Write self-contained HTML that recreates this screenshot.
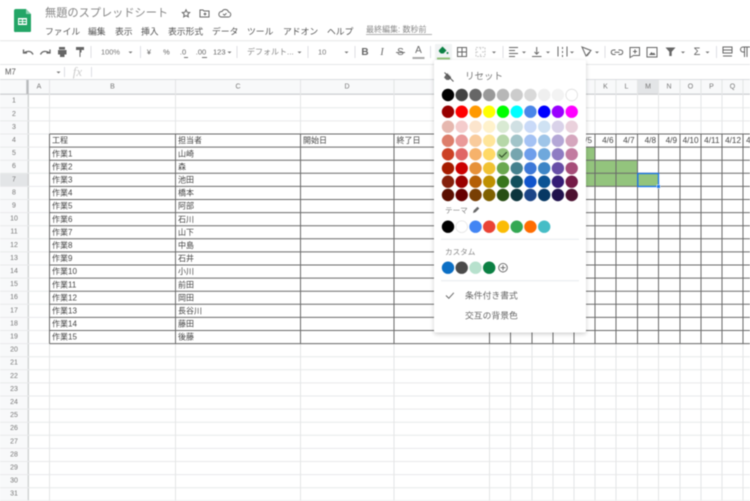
<!DOCTYPE html>
<html lang="ja"><head><meta charset="utf-8"><title>無題のスプレッドシート</title>
<style>
html,body{margin:0;padding:0;width:750px;height:501px;overflow:hidden;background:#fff}
svg{display:block;filter:blur(.45px)}
text{font-family:"Liberation Sans","Noto Sans CJK JP",sans-serif;fill:#444;dominant-baseline:central}
.m{font-size:8.8px;fill:#555}
.h{font-size:7px;fill:#777;text-anchor:middle}
.c{font-size:8px;fill:#444}
.d{font-size:8.2px;fill:#444;text-anchor:end}
.ar{fill:#777}
.ic{fill:none;stroke:#666;stroke-width:1}
.s{fill:#666}
</style></head><body>
<svg width="750" height="501" viewBox="0 0 750 501" xmlns="http://www.w3.org/2000/svg">
<rect width="750" height="501" fill="#fff"/>
<!-- logo -->
<path d="M16 9h10l5 5v17a1 1 0 0 1-1 1H16a1.500 1.500 0 0 1-2-1V11a2 2 0 0 1 2-2z" fill="#23a566"/>
<path d="M26 9l5 5h-5z" fill="#8ed1b1"/>
<path d="M18 18h9v7h-9z M19 19.500v1.500h3v-1.500z M23 19.500v1.500h3v-1.500z M19 22v1.500h3V22z M23 22v1.500h3V22z" fill="#fff" fill-rule="evenodd"/>
<!-- title -->
<text x="45" y="13.500" style="font-size:11.200px;fill:#888">無題のスプレッドシート</text>
<path d="M186 9.800l1.100 2.400 2.600.3-1.900 1.800.5 2.600-2.300-1.300-2.300 1.300.5-2.600-1.900-1.800 2.600-.3z" class="ic"/>
<path d="M200 10h3l1 1h5v6h-9z M205 12.500v3 M203.500 14h3" class="ic"/>
<path d="M221 17h7a2.500 2.500 0 0 0 .5-5 3.500 3.500 0 0 0-6.500-.5 2.800 2.800 0 0 0-1 5.500z M223 14l1.500 1.200 2-2" class="ic"/>
<!-- menu -->
<text x="45" y="31.500" class="m">ファイル</text><text x="88" y="31.500" class="m">編集</text><text x="115" y="31.500" class="m">表示</text><text x="141" y="31.500" class="m">挿入</text><text x="168" y="31.500" class="m">表示形式</text><text x="212" y="31.500" class="m">データ</text><text x="247" y="31.500" class="m">ツール</text><text x="283" y="31.500" class="m">アドオン</text><text x="327" y="31.500" class="m">ヘルプ</text>
<text x="366" y="29.500" style="font-size:8px;fill:#888">最終編集: 数秒前</text>
<path d="M366 34.500H432" stroke="#999" stroke-width=".7"/>
<!-- toolbar -->
<path d="M0 40.700H750M0 64.500H750" stroke="#e6e7e8" stroke-width="1"/>
<path d="M91 46v12M140.500 46v12M237 46v12M308 46v12M355 46v12M430.500 46v12M503 46v12M605 46v12M716.500 46v12" stroke="#dadce0" stroke-width=".9"/>
<path d="M33 54.500c-1.500-3.500-5-4-9-1.800M23.500 49.500v3.500h3.500" class="ic" style="stroke-width:1.300px"/>
<path d="M40.500 54.500c1.500-3.500 5-4 9-1.800M50 49.500v3.500h-3.500" class="ic" style="stroke-width:1.300px"/>
<path d="M59 47h6v2.500h-6z M58 50h8.500v4.500h-2v2.500h-4.500v-2.500h-2z" class="s"/>
<path d="M76 47h8v3h-8z M79.500 50h2v2.500h-1v4.500h-1z" class="s"/>
<text x="101" y="52" style="font-size:7.400px;fill:#777">100%</text>
<path d="M128.500 51.500h4l-2 2z M227.500 51.500h4l-2 2z M297.500 51.500h4l-2 2z M344.500 51.500h4l-2 2z M492 51.500h4l-2 2z M522 51.500h4l-2 2z M546 51.500h4l-2 2z M570 51.500h4l-2 2z M595 51.500h4l-2 2z M681 51.500h4l-2 2z M705.500 51.500h4l-2 2z" class="ar"/>
<text x="149" y="52" style="font-size:7.500px;fill:#666;text-anchor:middle">¥</text>
<text x="166.500" y="52" style="font-size:7.500px;fill:#666;text-anchor:middle">%</text>
<text x="183" y="52" style="font-size:7.500px;fill:#666;text-anchor:middle">.0</text><path d="M184 57.500h4" stroke="#666" stroke-width=".9"/>
<text x="201" y="52" style="font-size:7.500px;fill:#666;text-anchor:middle">.00</text><path d="M202 57.500h5" stroke="#666" stroke-width=".9"/>
<text x="213" y="52" style="font-size:7.500px;fill:#666">123</text>
<text x="247" y="52" style="font-size:8px;fill:#888">デフォルト...</text>
<text x="318" y="52" style="font-size:7.500px;fill:#777">10</text>
<text x="365" y="52.500" style="font-size:10px;font-weight:bold;fill:#666;text-anchor:middle">B</text>
<text x="382" y="52.500" style="font-size:10px;font-style:italic;font-family:'Liberation Serif',serif;fill:#666;text-anchor:middle">I</text>
<text x="400.500" y="52.500" style="font-size:10px;fill:#666;text-anchor:middle">S</text><path d="M396 52.500h9" stroke="#666" stroke-width=".9"/>
<text x="418.500" y="50.500" style="font-size:10px;fill:#666;text-anchor:middle">A</text><path d="M412.500 58h12" stroke="#aaa" stroke-width="2"/>
<rect x="435" y="44" width="17" height="16" fill="#f1f3f4" rx="1"/>
<path d="M442.500 46.500l4 4-3 3h-2.600l-2-2v-1.300z" fill="#0b8043"/><circle cx="447.500" cy="53" r="1" fill="#0b8043"/>
<path d="M437 58.500h13" stroke="#93c47d" stroke-width="2"/>
<path d="M457.500 47.500h9v9h-9z M462 47.500v9 M457.500 52h9" class="ic"/>
<path d="M476 47.500h9v9h-9z M480.500 47.500v2.500 M480.500 54v2.500 M476 52h3 M482 52h3" fill="none" stroke="#ccc" stroke-width="1" stroke-dasharray="2 1"/>
<path d="M509 47.500h9M509 50.500h6M509 53.500h9M509 56.500h6" class="ic"/>
<path d="M532 56.500h9.500M536.700 47v7M534.500 52l2.200 2.200 2.200-2.200" class="ic"/>
<path d="M558 46.500v10M567 46.500v10M562.500 47v2M562.500 51v2M562.500 55v2" class="ic"/>
<path d="M582 47l9 3.500-5 5.500zM590 52l-3 4" class="ic"/>
<path d="M615.500 50h-2a2.200 2.200 0 0 0 0 4.500h2M618.500 50h2a2.200 2.200 0 0 1 0 4.500h-2M614.500 52.200h5" class="ic"/>
<path d="M630 47.500h9.500v8h-6l-3.500 2zM635 49.500v4M633 51.500h4" class="ic"/>
<path d="M647 47.500h10v9.500h-10z" class="ic"/><path d="M649 55l2.500-3 1.500 1.500 1-1 1.500 2.500z" class="s"/>
<path d="M665.500 47.500h10l-3.800 4.300v4.200h-2.400v-4.200z" class="s"/>
<text x="697" y="52" style="font-size:11px;fill:#666;text-anchor:middle">Σ</text>
<path d="M723 47h9v6h-9zM723 50h9M723 56h9" class="ic"/>
<path d="M744.500 47h-1.500a2.500 2.500 0 0 0 0 5h1.500zM744.500 47v10M747 47v10M744 47h6" class="ic"/>
<!-- formula -->
<text x="5" y="72" style="font-size:7.800px;fill:#555">M7</text>
<path d="M56.500 71.500h4l-2 2z" class="ar"/>
<path d="M64.500 67v10M91.500 67v10" stroke="#dadce0" stroke-width=".9"/>
<text x="77.500" y="71.500" style="font-size:13px;font-style:italic;font-family:'Liberation Serif',serif;fill:#ccc;text-anchor:middle">fx</text>
<!-- headers -->
<rect x="0" y="79" width="750" height="15.500" fill="#f8f9fa"/>
<rect x="0" y="94.500" width="28" height="406.500" fill="#f8f9fa"/>
<rect x="637.500" y="79" width="21" height="15.500" fill="#e3e5e7"/>
<rect x="0" y="173.300" width="28" height="13.100" fill="#e3e5e7"/>
<path d="M0 79.500H750" stroke="#dadce0" stroke-width="1"/>
<path d="M0 94.200H750" stroke="#c8cacc" stroke-width="1.200"/>
<path d="M28.300 94V501" stroke="#c8cacc" stroke-width="1.200"/>
<path d="M27.500 80V94" stroke="#b8babc" stroke-width="2.400"/>
<!-- light grid -->
<path d="M0 107.800H750M0 120.900H750M0 134H750M0 147.100H49M0 160.200H49M0 173.300H49M0 186.400H49M0 199.500H49M0 212.600H49M0 225.700H49M0 238.800H49M0 251.900H49M0 265H49M0 278.100H49M0 291.200H49M0 304.300H49M0 317.400H49M0 330.500H49M0 343.600H750M0 356.700H750M0 369.800H750M0 382.900H750M0 396H750M0 409.100H750M0 422.200H750M0 435.300H750M0 448.400H750M0 461.500H750M0 474.600H750M0 487.700H750M0 500.800H750" stroke="#e8e9ea" stroke-width="1"/>
<path d="M49.500 80V501M175.500 80V501M300.500 80V501M394 80V501M489.500 80V501M510.500 80V501M532 80V501M553 80V501M574 80V501M595 80V501M616 80V501M637.500 80V501M658.500 80V501M680 80V501M701 80V501M722 80V501M743 80V501" stroke="#e4e5e6" stroke-width="1"/>
<!-- green fill -->
<path d="M574 147.100h21v13.100h42v13.100h21.500v13.100H574z" fill="#93c47d"/>
<!-- dark grid -->
<path d="M49.500 134H750M49.500 147.100H750M49.500 160.200H750M49.500 173.300H750M49.500 186.400H750M49.500 199.500H750M49.500 212.600H750M49.500 225.700H750M49.500 238.800H750M49.500 251.900H750M49.500 265H750M49.500 278.100H750M49.500 291.200H750M49.500 304.300H750M49.500 317.400H750M49.500 330.500H750M49.500 343.600H750" stroke="#6a6a6a" stroke-width="1"/>
<path d="M49.500 134V343.600M175.500 134V343.600M300.500 134V343.600M394 134V343.600M489.500 134V343.600M510.500 134V343.600M532 134V343.600M553 134V343.600M574 134V343.600M595 134V343.600M616 134V343.600M637.500 134V343.600M658.500 134V343.600M680 134V343.600M701 134V343.600M722 134V343.600M743 134V343.600" stroke="#6a6a6a" stroke-width="1"/>
<!-- selection -->
<rect x="637.800" y="173.500" width="20.700" height="13" fill="none" stroke="#1a73e8" stroke-width="1.300"/>
<rect x="656.800" y="184.800" width="3.400" height="3.400" fill="#1a73e8" stroke="#fff" stroke-width=".5"/>
<!-- col headers -->
<text x="39" y="87" class="h">A</text><text x="112.500" y="87" class="h">B</text><text x="238" y="87" class="h">C</text><text x="347" y="87" class="h">D</text><text x="605.500" y="87" class="h">K</text><text x="626.500" y="87" class="h">L</text><text x="648" y="87" class="h">M</text><text x="669" y="87" class="h">N</text><text x="690.500" y="87" class="h">O</text><text x="711.500" y="87" class="h">P</text><text x="732.500" y="87" class="h">Q</text>
<!-- row numbers -->
<text x="14" y="101.200" class="h">1</text><text x="14" y="114.300" class="h">2</text><text x="14" y="127.400" class="h">3</text><text x="14" y="140.500" class="h">4</text><text x="14" y="153.600" class="h">5</text><text x="14" y="166.700" class="h">6</text><text x="14" y="179.800" class="h">7</text><text x="14" y="192.900" class="h">8</text><text x="14" y="206" class="h">9</text><text x="14" y="219.100" class="h">10</text><text x="14" y="232.200" class="h">11</text><text x="14" y="245.300" class="h">12</text><text x="14" y="258.400" class="h">13</text><text x="14" y="271.500" class="h">14</text><text x="14" y="284.600" class="h">15</text><text x="14" y="297.700" class="h">16</text><text x="14" y="310.800" class="h">17</text><text x="14" y="323.900" class="h">18</text><text x="14" y="337" class="h">19</text><text x="14" y="350.100" class="h">20</text><text x="14" y="363.200" class="h">21</text><text x="14" y="376.300" class="h">22</text><text x="14" y="389.400" class="h">23</text><text x="14" y="402.500" class="h">24</text><text x="14" y="415.600" class="h">25</text><text x="14" y="428.700" class="h">26</text><text x="14" y="441.800" class="h">27</text><text x="14" y="454.900" class="h">28</text><text x="14" y="468" class="h">29</text><text x="14" y="481.100" class="h">30</text><text x="14" y="494.200" class="h">31</text>
<!-- cells B -->
<text x="52" y="140.700" class="c">工程</text><text x="52" y="153.800" class="c">作業1</text><text x="52" y="166.900" class="c">作業2</text><text x="52" y="180" class="c">作業3</text><text x="52" y="193.100" class="c">作業4</text><text x="52" y="206.200" class="c">作業5</text><text x="52" y="219.300" class="c">作業6</text><text x="52" y="232.400" class="c">作業7</text><text x="52" y="245.500" class="c">作業8</text><text x="52" y="258.600" class="c">作業9</text><text x="52" y="271.700" class="c">作業10</text><text x="52" y="284.800" class="c">作業11</text><text x="52" y="297.900" class="c">作業12</text><text x="52" y="311" class="c">作業13</text><text x="52" y="324.100" class="c">作業14</text><text x="52" y="337.200" class="c">作業15</text>
<!-- cells C -->
<text x="178" y="140.700" class="c">担当者</text><text x="178" y="153.800" class="c">山崎</text><text x="178" y="166.900" class="c">森</text><text x="178" y="180" class="c">池田</text><text x="178" y="193.100" class="c">橋本</text><text x="178" y="206.200" class="c">阿部</text><text x="178" y="219.300" class="c">石川</text><text x="178" y="232.400" class="c">山下</text><text x="178" y="245.500" class="c">中島</text><text x="178" y="258.600" class="c">石井</text><text x="178" y="271.700" class="c">小川</text><text x="178" y="284.800" class="c">前田</text><text x="178" y="297.900" class="c">岡田</text><text x="178" y="311" class="c">長谷川</text><text x="178" y="324.100" class="c">藤田</text><text x="178" y="337.200" class="c">後藤</text>
<text x="303" y="140.700" class="c">開始日</text><text x="396.500" y="140.700" class="c">終了日</text>
<!-- dates -->
<text x="592" y="140.700" class="d">4/5</text><text x="613.500" y="140.700" class="d">4/6</text><text x="634.500" y="140.700" class="d">4/7</text><text x="656" y="140.700" class="d">4/8</text><text x="677" y="140.700" class="d">4/9</text><text x="698.500" y="140.700" class="d">4/10</text><text x="719.500" y="140.700" class="d">4/11</text><text x="741" y="140.700" class="d">4/12</text><text x="762" y="140.700" class="d">4/13</text>
<!-- popup -->
<rect x="434" y="60" width="152" height="272.500" rx="2" fill="#000" opacity=".2" transform="translate(0 1.500)" style="filter:blur(2px)"/>
<rect x="434" y="60" width="152" height="272.500" rx="2" fill="#fff"/>
<path d="M447.500 72.500l3.500 3.500v2l-2 2h-2.500l-2.500-2.500z" fill="#666"/><path d="M444.500 72.500l9 9" stroke="#555" stroke-width="1"/><path d="M446 71.500l8.500 8.500" stroke="#fff" stroke-width=".8"/>
<text x="465" y="77" style="font-size:9.500px;fill:#777">リセット</text>
<g stroke="none">
<circle cx="448" cy="95" r="6.200" fill="#000000"/><circle cx="461.700" cy="95" r="6.200" fill="#434343"/><circle cx="475.500" cy="95" r="6.200" fill="#666666"/><circle cx="489.200" cy="95" r="6.200" fill="#999999"/><circle cx="503" cy="95" r="6.200" fill="#b7b7b7"/><circle cx="516.700" cy="95" r="6.200" fill="#cccccc"/><circle cx="530.400" cy="95" r="6.200" fill="#d9d9d9"/><circle cx="544.200" cy="95" r="6.200" fill="#efefef"/><circle cx="557.900" cy="95" r="6.200" fill="#f3f3f3"/><circle cx="571.700" cy="95" r="5.800" fill="#fff" stroke="#ddd" stroke-width=".8"/>
<circle cx="448" cy="111.700" r="6.200" fill="#980000"/><circle cx="461.700" cy="111.700" r="6.200" fill="#ff0000"/><circle cx="475.500" cy="111.700" r="6.200" fill="#ff9900"/><circle cx="489.200" cy="111.700" r="6.200" fill="#ffff00"/><circle cx="503" cy="111.700" r="6.200" fill="#00ff00"/><circle cx="516.700" cy="111.700" r="6.200" fill="#00ffff"/><circle cx="530.400" cy="111.700" r="6.200" fill="#4a86e8"/><circle cx="544.200" cy="111.700" r="6.200" fill="#0000ff"/><circle cx="557.900" cy="111.700" r="6.200" fill="#9900ff"/><circle cx="571.700" cy="111.700" r="6.200" fill="#ff00ff"/>
<circle cx="448" cy="126.700" r="6.200" fill="#e6b8af"/><circle cx="461.700" cy="126.700" r="6.200" fill="#f4cccc"/><circle cx="475.500" cy="126.700" r="6.200" fill="#fce5cd"/><circle cx="489.200" cy="126.700" r="6.200" fill="#fff2cc"/><circle cx="503" cy="126.700" r="6.200" fill="#d9ead3"/><circle cx="516.700" cy="126.700" r="6.200" fill="#d0e0e3"/><circle cx="530.400" cy="126.700" r="6.200" fill="#c9daf8"/><circle cx="544.200" cy="126.700" r="6.200" fill="#cfe2f3"/><circle cx="557.900" cy="126.700" r="6.200" fill="#d9d2e9"/><circle cx="571.700" cy="126.700" r="6.200" fill="#ead1dc"/>
<circle cx="448" cy="140.700" r="6.200" fill="#dd7e6b"/><circle cx="461.700" cy="140.700" r="6.200" fill="#ea9999"/><circle cx="475.500" cy="140.700" r="6.200" fill="#f9cb9c"/><circle cx="489.200" cy="140.700" r="6.200" fill="#ffe599"/><circle cx="503" cy="140.700" r="6.200" fill="#b6d7a8"/><circle cx="516.700" cy="140.700" r="6.200" fill="#a2c4c9"/><circle cx="530.400" cy="140.700" r="6.200" fill="#a4c2f4"/><circle cx="544.200" cy="140.700" r="6.200" fill="#9fc5e8"/><circle cx="557.900" cy="140.700" r="6.200" fill="#b4a7d6"/><circle cx="571.700" cy="140.700" r="6.200" fill="#d5a6bd"/>
<circle cx="448" cy="154.300" r="6.200" fill="#cc4125"/><circle cx="461.700" cy="154.300" r="6.200" fill="#e06666"/><circle cx="475.500" cy="154.300" r="6.200" fill="#f6b26b"/><circle cx="489.200" cy="154.300" r="6.200" fill="#ffd966"/><circle cx="503" cy="154.300" r="6.200" fill="#93c47d"/><circle cx="516.700" cy="154.300" r="6.200" fill="#76a5af"/><circle cx="530.400" cy="154.300" r="6.200" fill="#6d9eeb"/><circle cx="544.200" cy="154.300" r="6.200" fill="#6fa8dc"/><circle cx="557.900" cy="154.300" r="6.200" fill="#8e7cc3"/><circle cx="571.700" cy="154.300" r="6.200" fill="#c27ba0"/>
<circle cx="448" cy="168.300" r="6.200" fill="#a61c00"/><circle cx="461.700" cy="168.300" r="6.200" fill="#cc0000"/><circle cx="475.500" cy="168.300" r="6.200" fill="#e69138"/><circle cx="489.200" cy="168.300" r="6.200" fill="#f1c232"/><circle cx="503" cy="168.300" r="6.200" fill="#6aa84f"/><circle cx="516.700" cy="168.300" r="6.200" fill="#45818e"/><circle cx="530.400" cy="168.300" r="6.200" fill="#3c78d8"/><circle cx="544.200" cy="168.300" r="6.200" fill="#3d85c6"/><circle cx="557.900" cy="168.300" r="6.200" fill="#674ea7"/><circle cx="571.700" cy="168.300" r="6.200" fill="#a64d79"/>
<circle cx="448" cy="181.700" r="6.200" fill="#85200c"/><circle cx="461.700" cy="181.700" r="6.200" fill="#990000"/><circle cx="475.500" cy="181.700" r="6.200" fill="#b45f06"/><circle cx="489.200" cy="181.700" r="6.200" fill="#bf9000"/><circle cx="503" cy="181.700" r="6.200" fill="#38761d"/><circle cx="516.700" cy="181.700" r="6.200" fill="#134f5c"/><circle cx="530.400" cy="181.700" r="6.200" fill="#1155cc"/><circle cx="544.200" cy="181.700" r="6.200" fill="#0b5394"/><circle cx="557.900" cy="181.700" r="6.200" fill="#351c75"/><circle cx="571.700" cy="181.700" r="6.200" fill="#741b47"/>
<circle cx="448" cy="195" r="6.200" fill="#5b0f00"/><circle cx="461.700" cy="195" r="6.200" fill="#660000"/><circle cx="475.500" cy="195" r="6.200" fill="#783f04"/><circle cx="489.200" cy="195" r="6.200" fill="#7f6000"/><circle cx="503" cy="195" r="6.200" fill="#274e13"/><circle cx="516.700" cy="195" r="6.200" fill="#0c343d"/><circle cx="530.400" cy="195" r="6.200" fill="#1c4587"/><circle cx="544.200" cy="195" r="6.200" fill="#073763"/><circle cx="557.900" cy="195" r="6.200" fill="#20124d"/><circle cx="571.700" cy="195" r="6.200" fill="#4c1130"/>
</g>
<path d="M499 154.500l2.800 2.600 5-5" fill="none" stroke="#2f4a28" stroke-width="1.100"/>
<text x="445" y="210.500" style="font-size:7.600px;fill:#888">テーマ</text>
<path d="M473 213l.7-2.500 3.800-3.800 1.800 1.800-3.800 3.800z" fill="#666"/>
<circle cx="448" cy="226.700" r="6.200" fill="#000"/><circle cx="461.700" cy="226.700" r="5.800" fill="#fff" stroke="#e4e4e4" stroke-width=".8"/><circle cx="475.500" cy="226.700" r="6.200" fill="#4285f4"/><circle cx="489.200" cy="226.700" r="6.200" fill="#ea4335"/><circle cx="503" cy="226.700" r="6.200" fill="#fbbc04"/><circle cx="516.700" cy="226.700" r="6.200" fill="#34a853"/><circle cx="530.400" cy="226.700" r="6.200" fill="#ff6d01"/><circle cx="544.200" cy="226.700" r="6.200" fill="#46bdc6"/>
<path d="M441 239.300H579M441 280.700H579" stroke="#e8eaed" stroke-width="1"/>
<text x="445" y="252" style="font-size:7.600px;fill:#888">カスタム</text>
<circle cx="448" cy="267.700" r="6.200" fill="#0b6fc5"/><circle cx="461.700" cy="267.700" r="6.200" fill="#4a4a4a"/><circle cx="475.500" cy="267.700" r="6.200" fill="#b7e1cd"/><circle cx="489.200" cy="267.700" r="6.200" fill="#0b8043"/>
<circle cx="503" cy="267.700" r="4.300" fill="none" stroke="#666" stroke-width=".9"/><path d="M500.500 267.700h5M503 265.200v5" stroke="#666" stroke-width=".9"/>
<path d="M446 295.500l2.800 2.800 5-5.500" fill="none" stroke="#666" stroke-width="1"/>
<text x="465" y="295.500" style="font-size:8.800px;fill:#666">条件付き書式</text>
<text x="465" y="315.500" style="font-size:8.800px;fill:#666">交互の背景色</text>
</svg>
</body></html>
